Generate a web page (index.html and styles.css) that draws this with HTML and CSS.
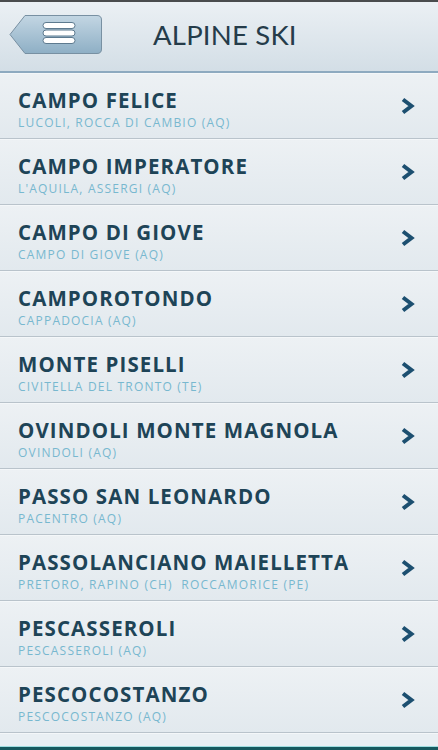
FILE: index.html
```html
<!DOCTYPE html>
<html>
    <head>
        <title>Alpine Ski</title>
        <meta charset="utf-8">
        <link rel="stylesheet" href="styles.css">
    </head>
    <body>
        <div class="topline"></div>
        <div class="header">
            <div class="menu-btn">
                <svg width="94" height="42" viewBox="0 0 94 42">
                    <defs>
                        <linearGradient id="btnfill" x1="0" y1="0" x2="0" y2="1">
                            <stop offset="0" stop-color="#c3d6e3"/>
                            <stop offset="1" stop-color="#8eafc5"/>
                        </linearGradient>
                    </defs>
                    <path d="M1 20.5 L16 1.5 H88 Q92.5 1.5 92.5 6 V35 Q92.5 39.5 88 39.5 H16 Z" fill="url(#btnfill)" stroke="#7890a2" stroke-width="1"/>
                    <rect x="34" y="8.5" width="32" height="6" rx="3" fill="#fff" stroke="#5d7a8f" stroke-width="1"/>
                    <rect x="34" y="16" width="32" height="6" rx="3" fill="#fff" stroke="#5d7a8f" stroke-width="1"/>
                    <rect x="34" y="23.5" width="32" height="6" rx="3" fill="#fff" stroke="#5d7a8f" stroke-width="1"/>
                </svg>
            </div>
            <div class="title">ALPINE SKI</div>
        </div>

        <div class="list">
            <div class="row">
                <div class="names">
                    <div class="name">CAMPO FELICE</div>
                    <div class="place">LUCOLI, ROCCA DI CAMBIO (AQ)</div>
                </div>
                <svg class="chev" width="16" height="18" viewBox="0 0 16 18"><polyline points="4,2.5 12.5,9 4,15.5" fill="none" stroke="#1c4f70" stroke-width="4"/></svg>
            </div>
            <div class="row">
                <div class="names">
                    <div class="name">CAMPO IMPERATORE</div>
                    <div class="place">L'AQUILA, ASSERGI (AQ)</div>
                </div>
                <svg class="chev" width="16" height="18" viewBox="0 0 16 18"><polyline points="4,2.5 12.5,9 4,15.5" fill="none" stroke="#1c4f70" stroke-width="4"/></svg>
            </div>
            <div class="row">
                <div class="names">
                    <div class="name">CAMPO DI GIOVE</div>
                    <div class="place">CAMPO DI GIOVE (AQ)</div>
                </div>
                <svg class="chev" width="16" height="18" viewBox="0 0 16 18"><polyline points="4,2.5 12.5,9 4,15.5" fill="none" stroke="#1c4f70" stroke-width="4"/></svg>
            </div>
            <div class="row">
                <div class="names">
                    <div class="name">CAMPOROTONDO</div>
                    <div class="place">CAPPADOCIA (AQ)</div>
                </div>
                <svg class="chev" width="16" height="18" viewBox="0 0 16 18"><polyline points="4,2.5 12.5,9 4,15.5" fill="none" stroke="#1c4f70" stroke-width="4"/></svg>
            </div>
            <div class="row">
                <div class="names">
                    <div class="name">MONTE PISELLI</div>
                    <div class="place">CIVITELLA DEL TRONTO (TE)</div>
                </div>
                <svg class="chev" width="16" height="18" viewBox="0 0 16 18"><polyline points="4,2.5 12.5,9 4,15.5" fill="none" stroke="#1c4f70" stroke-width="4"/></svg>
            </div>
            <div class="row">
                <div class="names">
                    <div class="name">OVINDOLI MONTE MAGNOLA</div>
                    <div class="place">OVINDOLI (AQ)</div>
                </div>
                <svg class="chev" width="16" height="18" viewBox="0 0 16 18"><polyline points="4,2.5 12.5,9 4,15.5" fill="none" stroke="#1c4f70" stroke-width="4"/></svg>
            </div>
            <div class="row">
                <div class="names">
                    <div class="name">PASSO SAN LEONARDO</div>
                    <div class="place">PACENTRO (AQ)</div>
                </div>
                <svg class="chev" width="16" height="18" viewBox="0 0 16 18"><polyline points="4,2.5 12.5,9 4,15.5" fill="none" stroke="#1c4f70" stroke-width="4"/></svg>
            </div>
            <div class="row">
                <div class="names">
                    <div class="name">PASSOLANCIANO MAIELLETTA</div>
                    <div class="place">PRETORO, RAPINO (CH) &nbsp;ROCCAMORICE (PE)</div>
                </div>
                <svg class="chev" width="16" height="18" viewBox="0 0 16 18"><polyline points="4,2.5 12.5,9 4,15.5" fill="none" stroke="#1c4f70" stroke-width="4"/></svg>
            </div>
            <div class="row">
                <div class="names">
                    <div class="name">PESCASSEROLI</div>
                    <div class="place">PESCASSEROLI (AQ)</div>
                </div>
                <svg class="chev" width="16" height="18" viewBox="0 0 16 18"><polyline points="4,2.5 12.5,9 4,15.5" fill="none" stroke="#1c4f70" stroke-width="4"/></svg>
            </div>
            <div class="row">
                <div class="names">
                    <div class="name">PESCOCOSTANZO</div>
                    <div class="place">PESCOCOSTANZO (AQ)</div>
                </div>
                <svg class="chev" width="16" height="18" viewBox="0 0 16 18"><polyline points="4,2.5 12.5,9 4,15.5" fill="none" stroke="#1c4f70" stroke-width="4"/></svg>
            </div>
        </div>
        <div class="filler"></div>
        <div class="bottomline"></div>
    </body>
</html>
```

FILE: styles.css
```css
html, body {
    margin: 0;
    padding: 0;
    height: 750px;
    overflow: hidden;
}

body {
    display: flex;
    flex-direction: column;
    background: #e8eef2;
    font-family: "Open Sans", "Liberation Sans", sans-serif;
}

.topline {
    height: 2px;
    background: #4a4c4e;
}

.header {
    height: 69px;
    display: flex;
    align-items: center;
    background: linear-gradient(#ebf0f4, #d3dee6);
    border-bottom: 2px solid #8eaac0;
}

.menu-btn {
    width: 94px;
    height: 42px;
    margin-left: 9px;
    margin-top: -4px;
}

.title {
    margin-left: 50px;
    margin-top: -4px;
    font-family: Lato, "Open Sans", sans-serif;
    font-size: 27.5px;
    font-weight: 400;
    color: #253c4a;
    letter-spacing: 0.2px;
}

.list {
    display: flex;
    flex-direction: column;
}

.row {
    height: 64px;
    display: flex;
    align-items: center;
    padding: 0 23px 0 18px;
    background: linear-gradient(#edf1f4, #e2e9ee);
    border-bottom: 1px solid #b9c3cb;
    border-top: 1px solid #f4f7f9;
}

.names {
    flex: 1;
    display: flex;
    flex-direction: column;
    margin-top: 5px;
}

.name {
    font-size: 20.5px;
    font-weight: 700;
    color: #1e4457;
    line-height: 27px;
    letter-spacing: 1.1px;
}

.place {
    font-size: 12px;
    font-weight: 400;
    color: #78b8cf;
    line-height: 17px;
    letter-spacing: 1.2px;
}

.chev {
    display: block;
}

.filler {
    flex: 1;
    background: #e9eff3;
    border-top: 1px solid #f4f7f9;
}

.bottomline {
    height: 3px;
    background: #17595f;
    border-top: 1px solid #9fdde0;
}
```
